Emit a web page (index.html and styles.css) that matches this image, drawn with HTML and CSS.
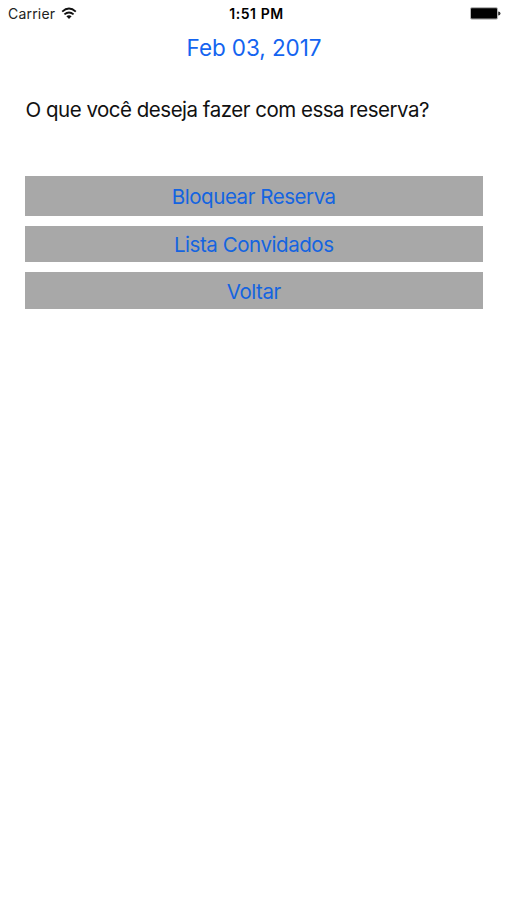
FILE: index.html
```html
<!DOCTYPE html>
<html lang="pt-BR">
<head>
<meta charset="utf-8">
<title>Reserva</title>
<link rel="stylesheet" href="styles.css">
</head>
<body>
<header class="status">
  <div class="carrier"><span class="carrier-name">Carrier</span>
    <svg class="wifi" width="16" height="13" viewBox="0 0 16 13" fill="none" stroke="#111" stroke-width="1.9"><path d="M1.2 4.6Q8-1.4 14.8 4.6M3.4 7.4Q8 3.4 12.6 7.4"/><path d="M5.4 9.3Q8 7.1 10.6 9.3L8 12Z" fill="#111" stroke="none"/></svg>
  </div>
  <div class="clock"><span class="time">1:51 PM</span></div>
  <svg class="battery" width="31" height="13" viewBox="0 0 31 13"><rect x=".4" y=".5" width="27.2" height="11.8" rx="1.5" fill="#aaa" stroke="#aaa" stroke-width=".7"/><rect x="1" y="1.2" width="26" height="10.4" rx=".8" fill="#000"/><path d="M28.2 4.5Q30.5 4.7 30.5 6.5T28.2 8.5Z" fill="#333"/></svg>
</header>
<h1 class="date"><span class="date-text">Feb 03, 2017</span></h1>
<main class="content">
  <p class="question"><span class="question-text">O que você deseja fazer com essa reserva?</span></p>
  <div class="actions">
    <button class="action primary"><span class="action-label">Bloquear Reserva</span></button>
    <button class="action"><span class="action-label">Lista Convidados</span></button>
    <button class="action"><span class="action-label">Voltar</span></button>
  </div>
</main>
</body>
</html>
```
FILE: styles.css
```css
* { box-sizing: border-box; }
body { margin: 0; width: 507px; height: 900px; overflow: hidden; background: #fff; color: #000; font-family: Inter, sans-serif; }
.status { display: grid; grid-template-columns: 1fr 60px 1fr; align-items: center; height: 27px; padding: 0 6px 0 8px; font-size: 14px; }
.carrier { display: flex; align-items: center; gap: 6px; letter-spacing: .2px; color: #222; }
.wifi { margin-top: -1px; }
.clock { padding-left: 4px; text-align: center; font-size: 14px; font-weight: 600; letter-spacing: .55px; white-space: nowrap; }
.battery { justify-self: end; }
.date { margin: 7px 0 0; padding-left: 1px; text-align: center; font-size: 22.5px; line-height: 28px; font-weight: 400; letter-spacing: -.08px; color: #1464f0; }
.content { padding: 0 25px; }
.question { margin: 34px 0 0; padding-left: .5px; font-size: 20.5px; line-height: 28px; white-space: nowrap; letter-spacing: -.49px; color: #111; }
.actions { display: flex; flex-direction: column; gap: 10px; margin-top: 51.7px; }
.action { width: 457.5px; height: 36.5px; border: 0; border-radius: 0; padding: 2.2px 0 0; background: #a8a8a8; color: #1464e0; font: 400 20.5px/28px Inter, sans-serif; letter-spacing: -.45px; }
.primary { height: 40px; }
```
